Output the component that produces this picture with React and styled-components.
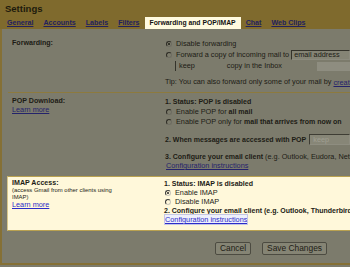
import React from 'react';
import styled, { createGlobalStyle } from 'styled-components';

const Global = createGlobalStyle`
  html, body { margin: 0; padding: 0; background: #7c7b6c; overflow: hidden; }
  body { font-family: "Liberation Sans", Arial, sans-serif; color: #1d1c15; }
  #root { width: 350px; height: 267px; }
`;

const Page = styled.div`
  width: 350px;
  height: 267px;
  overflow: hidden;
  display: flex;
  flex-direction: column;
  padding-bottom: 2px;
  box-sizing: border-box;
`;

const Header = styled.div`
  background: #7f6a2d;
  height: 29px;
  flex: none;
  padding-top: 3px;
  box-sizing: border-box;
`;

const Title = styled.div`
  font-weight: bold;
  font-size: 9.5px;
  line-height: 11px;
  padding-left: 5px;
  color: #1d1a0c;
`;

const TabRow = styled.div`
  display: flex;
  margin-top: 3px;
  padding-left: 2px;
  height: 12px;
  white-space: nowrap;
`;

const Tab = styled.span`
  font-weight: bold;
  font-size: ${p => (p.$active ? '6.8px' : '7.1px')};
  line-height: 12px;
  padding: 0 5px;
  color: ${p => (p.$active ? '#121212' : '#22215e')};
  text-decoration: ${p => (p.$active ? 'none' : 'underline')};
  background: ${p => (p.$active ? '#fffadf' : 'transparent')};
`;

const Body = styled.div`
  flex: 1;
  border-left: 2px solid #857035;
  border-bottom: 2px solid #857035;
  display: flex;
  flex-direction: column;
  overflow: hidden;
  white-space: nowrap;
`;

const Section = styled.div`
  display: grid;
  grid-template-columns: 153px 1fr;
  padding: ${p => p.$pad || '0'};
  padding-left: 10px;
  overflow: hidden;
`;

const Highlight = styled.div`
  margin-left: 5px;
  background: #fff8da;
  border-top: 1px solid #b9a150;
  border-bottom: 1px solid #b9a150;
  border-left: 1px solid #d8c68a;
  display: grid;
  grid-template-columns: 152px 1fr;
  padding: 2px 0 6px 4px;
  overflow: hidden;
`;

const Col = styled.div`
  display: flex;
  flex-direction: column;
  min-width: 0;
`;

const Line = styled.div`
  font-size: 7.3px;
  line-height: ${p => p.$lh || 10}px;
  height: ${p => p.$lh || 10}px;
  margin-top: ${p => p.$mt || 0}px;
  padding-left: ${p => p.$indent || 0}px;
  display: flex;
  align-items: center;
  white-space: nowrap;
`;

const Label = styled.div`
  font-weight: bold;
  font-size: 7.1px;
  line-height: ${p => p.$lh || 10}px;
  margin-top: ${p => p.$mt || 0}px;
`;

const Small = styled.div`
  font-size: 5.9px;
  line-height: 7px;
`;

const B = styled.b`
  font-weight: bold;
  font-size: 7px;
`;

const Link = styled.span`
  color: ${p => (p.$bright ? '#2c2cc8' : '#24236b')};
  text-decoration: underline;
  font-size: 7.3px;
  line-height: ${p => p.$lh || 9}px;
  ${p => (p.$focus ? 'outline: 1px solid #c4c6e6; background: #eef0fb;' : '')}
`;

const LinkLine = styled.div`
  line-height: ${p => p.$lh || 9}px;
  height: ${p => p.$lh || 9}px;
  padding-left: ${p => p.$indent || 0}px;
  display: flex;
  align-items: center;
`;

const Radio = styled.span`
  width: 6px;
  height: 6px;
  border-radius: 50%;
  box-sizing: border-box;
  border: 1px solid ${p => (p.$lit ? '#c9c6bc' : '#6e6d62')};
  border-left-color: ${p => (p.$lit ? '#3a3a3a' : '#2e2d26')};
  border-top-color: ${p => (p.$lit ? '#3a3a3a' : '#2e2d26')};
  margin: 0 4px 0 1px;
  flex: none;
  display: flex;
  align-items: center;
  justify-content: center;
  &::after {
    content: '';
    width: 2px;
    height: 2px;
    border-radius: 50%;
    background: ${p => (p.$on ? (p.$lit ? '#222' : '#1d1c15') : 'transparent')};
  }
`;

const TextInput = styled.span`
  display: inline-flex;
  align-items: center;
  height: 10px;
  box-sizing: border-box;
  border: 1px solid #8c8b7e;
  border-left-color: #34332b;
  border-top-color: #34332b;
  background: #858475;
  padding: 0 2px;
  margin-left: 2px;
  font-size: 7.3px;
  flex: 1;
`;

const SelectBox = styled.span`
  display: inline-flex;
  align-items: center;
  width: 142px;
  height: 10px;
  box-sizing: border-box;
  border-left: 1px solid #34332b;
  padding-left: 3px;
  font-size: 7.3px;
  flex: none;
`;

const SelectRest = styled.span`
  margin-left: 32px;
`;

const LightBlock = styled.span`
  flex: 1;
  height: 9px;
  background: #8e8d80;
`;

const PopSelect = styled.span`
  display: inline-flex;
  align-items: center;
  height: 11px;
  box-sizing: border-box;
  border: 1px solid #8e8d80;
  border-left-color: #3e3d34;
  border-top-color: #3e3d34;
  background: #878677;
  color: #a09f92;
  padding-left: 3px;
  margin-left: 3px;
  font-size: 7.3px;
  flex: 1;
`;

const Separator = styled.div`
  height: 1px;
  background: #8d7a3e;
  margin-left: 6px;
  flex: none;
`;

const Buttons = styled.div`
  display: flex;
  justify-content: flex-end;
  gap: 11px;
  padding-right: 23px;
  margin-top: 11px;
`;

const Button = styled.span`
  height: 13px;
  box-sizing: border-box;
  border: 1px solid #4c4b41;
  border-radius: 2px;
  background: #858474;
  font-size: 8.4px;
  line-height: 11px;
  padding: 0 4px;
  color: #1d1c15;
`;

export default function App() {
  return (
    <Page>
      <Global />
      <Header>
        <Title>Settings</Title>
        <TabRow>
          <Tab>General</Tab>
          <Tab>Accounts</Tab>
          <Tab>Labels</Tab>
          <Tab>Filters</Tab>
          <Tab $active>Forwarding and POP/IMAP</Tab>
          <Tab>Chat</Tab>
          <Tab>Web Clips</Tab>
        </TabRow>
      </Header>
      <Body>
        <Section $pad="9px 0 5px 0">
          <Col>
            <Label $lh={11}>Forwarding:</Label>
          </Col>
          <Col>
            <Line $lh={11}><Radio $on />Disable forwarding</Line>
            <Line $lh={11}><Radio />Forward a copy of incoming mail to<TextInput>email address</TextInput></Line>
            <Line $lh={10} $mt={1} $indent={10}>
              <SelectBox>keep<SelectRest>copy in the Inbox</SelectRest></SelectBox>
              <LightBlock />
            </Line>
            <Line $lh={10} $mt={6}>Tip: You can also forward only some of your mail by&nbsp;<Link>creating</Link></Line>
          </Col>
        </Section>
        <Separator />
        <Section $pad="4px 0 6px 0">
          <Col>
            <Label $lh={9}>POP Download:</Label>
            <LinkLine $lh={8}><Link $lh={8}>Learn more</Link></LinkLine>
          </Col>
          <Col>
            <Line><B>1. Status: POP is disabled</B></Line>
            <Line><Radio />Enable POP for&nbsp;<B>all mail</B></Line>
            <Line><Radio />Enable POP only for&nbsp;<B>mail that arrives from now on</B></Line>
            <Line $lh={11} $mt={7}><B>2. When messages are accessed with POP</B><PopSelect>keep</PopSelect></Line>
            <Line $lh={9} $mt={7}><B>3. Configure your email client</B>&nbsp;(e.g. Outlook, Eudora, Netscape Mail)</Line>
            <LinkLine $indent={1}><Link>Configuration instructions</Link></LinkLine>
          </Col>
        </Section>
        <Highlight>
          <Col>
            <Label $lh={8}>IMAP Access:</Label>
            <Small>(access Gmail from other clients using</Small>
            <Small>IMAP)</Small>
            <LinkLine $lh={8}><Link $bright $lh={8}>Learn more</Link></LinkLine>
          </Col>
          <Col>
            <Line $lh={9}><B>1. Status: IMAP is disabled</B></Line>
            <Line $lh={9}><Radio $lit $on />Enable IMAP</Line>
            <Line $lh={9}><Radio $lit />Disable IMAP</Line>
            <Line $lh={9}><B>2. Configure your email client (e.g. Outlook, Thunderbird, iPhone)</B></Line>
            <LinkLine $indent={1}><Link $bright $focus>Configuration instructions</Link></LinkLine>
          </Col>
        </Highlight>
        <Buttons>
          <Button>Cancel</Button>
          <Button>Save Changes</Button>
        </Buttons>
      </Body>
    </Page>
  );
}
